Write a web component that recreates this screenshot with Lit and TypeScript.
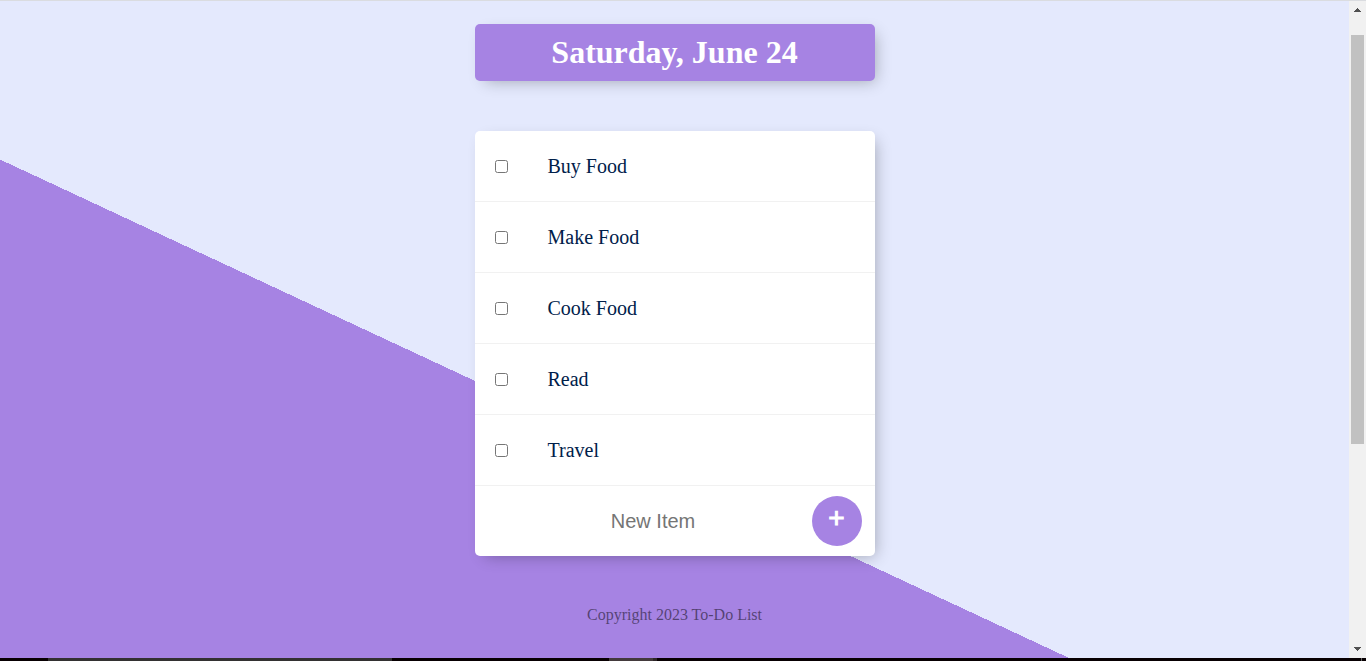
import { LitElement, html, css, svg } from "lit";
import { customElement, state } from "lit/decorators.js";

interface Item {
  name: string;
  done: boolean;
}

@customElement("app-root")
export class AppRoot extends LitElement {
  static styles = css`
    :host {
      display: flex;
      flex-direction: column;
      box-sizing: border-box;
      height: 100vh;
      overflow: hidden;
      border-top: 1px solid #dadce0;
      font-family: "Liberation Serif", "Times New Roman", serif;
    }
    .view {
      flex: 1;
      min-height: 0;
      display: flex;
    }
    .page {
      flex: 1;
      min-width: 0;
      padding-top: 23px;
      overflow: hidden;
      background: #e4e9fd linear-gradient(25deg, #a683e3 50%, #e4e9fd 50%) 0 -27px / 100% 1000px no-repeat;
    }
    .box {
      max-width: 400px;
      margin: 0 auto 50px;
      background: #fff;
      border-radius: 5px;
      box-shadow: 5px 5px 15px -5px rgba(0, 0, 0, 0.3);
    }
    .heading {
      background: #a683e3;
      text-align: center;
    }
    h1 {
      margin: 0;
      padding: 10px;
      color: #fff;
      font-size: 32px;
      line-height: 37px;
    }
    .item {
      min-height: 70px;
      display: flex;
      align-items: center;
      border-bottom: 1px solid #f1f1f1;
    }
    .check {
      width: 13px;
      height: 13px;
      margin: 20px;
    }
    .name {
      padding: 20px;
      font-size: 20px;
      line-height: 24px;
      color: #00204a;
    }
    .check:checked + .name {
      text-decoration: line-through #a683e3;
    }
    .add {
      min-height: 70px;
      display: flex;
      align-items: center;
      padding: 0 13px 0 20px;
    }
    .entry {
      flex: 1;
      min-width: 0;
      height: 60px;
      padding: 0;
      border: 0;
      background: transparent;
      text-align: center;
      font-family: "Liberation Sans", Arial, sans-serif;
      font-size: 20px;
      outline: none;
    }
    .entry::placeholder {
      color: #757575;
    }
    .plus {
      width: 50px;
      height: 50px;
      padding: 0 0 6px;
      border: 0;
      border-radius: 50%;
      background: #a683e3;
      color: #fff;
      font-family: "Liberation Sans", Arial, sans-serif;
      font-size: 28px;
      -webkit-text-stroke: 1px #fff;
      cursor: pointer;
    }
    footer {
      text-align: center;
      font-size: 16px;
      line-height: 18px;
      color: rgba(0, 0, 0, 0.5);
    }
    .scroll {
      width: 17px;
      display: flex;
      flex-direction: column;
      background: #f1f1f1;
    }
    .arrow {
      display: block;
      width: 17px;
      height: 17px;
      fill: #505050;
    }
    .track {
      flex: 1;
      display: grid;
      grid-template-rows: 17fr 409fr 197fr;
      padding: 0 2px;
    }
    .thumb {
      grid-row: 2;
      background: #c1c1c1;
    }
    .taskbar {
      display: flex;
      height: 3px;
      background: #080002;
    }
    .search {
      width: 344px;
      margin-left: 48px;
      background: #333132;
    }
    .running {
      width: 44px;
      margin-left: 217px;
      background: #433a3c;
    }
    .stack {
      width: 4px;
      background: #2e2628;
    }
    .desktop {
      width: 1px;
      margin: 0 4px 0 auto;
      background: #666;
    }
  `;

  @state() private items: Item[] = ["Buy Food", "Make Food", "Cook Food", "Read", "Travel"].map(
    (name) => ({ name, done: false })
  );

  private toggle(index: number) {
    this.items = this.items.map((it, i) => (i === index ? { ...it, done: !it.done } : it));
  }

  private add(e: Event) {
    e.preventDefault();
    const form = e.target as HTMLFormElement;
    const input = form.querySelector("input") as HTMLInputElement;
    const name = input.value.trim();
    if (name) this.items = [...this.items, { name, done: false }];
    form.reset();
  }

  private arrow(shape: unknown) {
    return html`<svg class="arrow" viewBox="0 0 17 17" shape-rendering="crispEdges" aria-hidden="true">${shape}</svg>`;
  }

  render() {
    return html`
      <div class="view">
        <div class="page">
          <header class="box heading"><h1>Saturday, June 24</h1></header>
          <main class="box">
            ${this.items.map(
              (it, i) => html`
                <div class="item">
                  <input class="check" type="checkbox" id="item-${i}" .checked=${it.done} @change=${() => this.toggle(i)} />
                  <label class="name" for="item-${i}">${it.name}</label>
                </div>
              `
            )}
            <form class="add" @submit=${this.add}>
              <input class="entry" type="text" name="item" placeholder="New Item" aria-label="New Item" autocomplete="off" />
              <button class="plus" type="submit" aria-label="Add item">+</button>
            </form>
          </main>
          <footer>Copyright 2023 To-Do List</footer>
        </div>
        <div class="scroll">
          ${this.arrow(svg`<path d="M8 7h1v1h1v1h1v1h1v1H5v-1h1V9h1V8h1z" />`)}
          <div class="track"><div class="thumb"></div></div>
          ${this.arrow(svg`<path d="M5 6h7v1h-1v1h-1v1H9v1H8V9H7V8H6V7H5z" />`)}
        </div>
      </div>
      <div class="taskbar">
        <div class="search"></div>
        <div class="running"></div>
        <div class="stack"></div>
        <div class="desktop"></div>
      </div>
    `;
  }
}
